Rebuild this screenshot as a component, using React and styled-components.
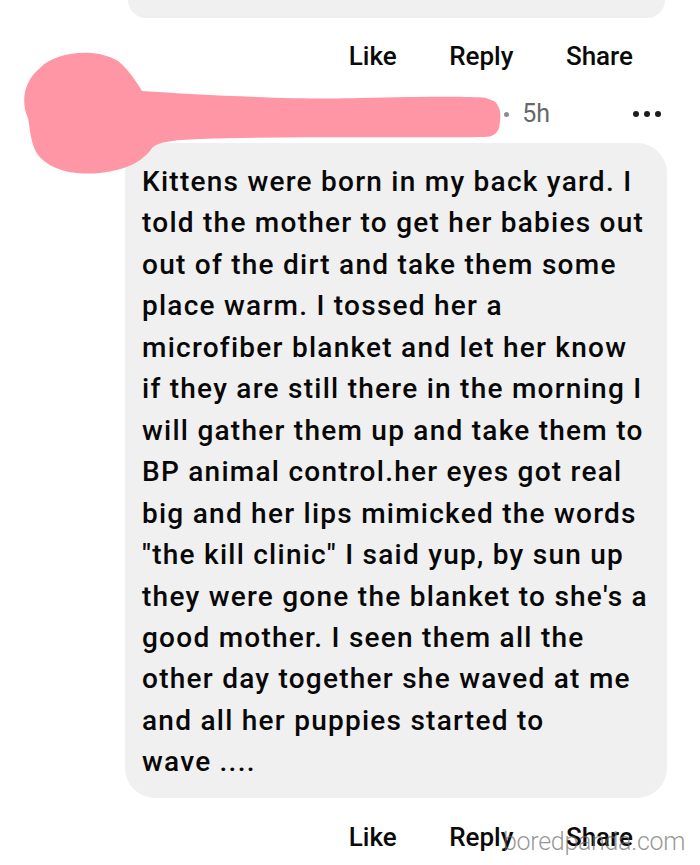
import React from 'react';
import styled, {createGlobalStyle} from 'styled-components';

const GlobalStyle = createGlobalStyle`
  html, body {
    margin: 0;
    padding: 0;
    background: #ffffff;
  }
  body {
    font-family: Roboto, "Liberation Sans", Arial, sans-serif;
    color: #050505;
  }
`;

const Page = styled.div`
  position: relative;
  width: 700px;
  height: 865px;
  overflow: hidden;
  background: #ffffff;
`;

const Thread = styled.div`
  display: grid;
  grid-template-columns: 125px 542px;
  padding-right: 33px;
`;

const Gutter = styled.div``;

const Column = styled.div`
  display: flex;
  flex-direction: column;
`;

const PrevBubble = styled.div`
  height: 18px;
  margin-left: 3px;
  margin-right: 2px;
  background: #f0f0f0;
  border-radius: 0 0 28px 28px;
`;

const Actions = styled.div`
  display: flex;
  justify-content: flex-end;
  gap: 52.5px;
  height: 30px;
  margin-top: ${p => p.$top}px;
  padding-right: 34px;
  font-size: 26px;
  line-height: 30px;
  font-weight: 500;
  color: #0a0a0a;
`;

const Action = styled.span`
  white-space: nowrap;
`;

const Meta = styled.div`
  display: flex;
  align-items: center;
  justify-content: flex-end;
  height: 30px;
  margin-top: 28px;
  padding-right: 6px;
  font-size: 25px;
  line-height: 30px;
  color: #65676b;
`;

const Dot = styled.span`
  width: 5px;
  height: 5px;
  border-radius: 50%;
  background: #8a8d91;
  margin-right: 13px;
`;

const Time = styled.span`
  margin-right: 83px;
`;

const Menu = styled.div`
  display: flex;
  gap: 5px;
  & > i {
    width: 6px;
    height: 6px;
    border-radius: 50%;
    background: #1c1c1c;
  }
`;

const Bubble = styled.div`
  margin-top: 14px;
  padding: 18px 12px 15px 17px;
  background: #f0f0f0;
  border-radius: 30px;
  font-size: 28px;
  line-height: 41.45px;
  font-weight: 500;
  letter-spacing: 1.25px;
  color: #080808;
`;

const Line = styled.div`
  white-space: nowrap;
`;

const Watermark = styled.div`
  position: absolute;
  left: 503px;
  top: 827px;
  font-size: 25px;
  line-height: 30px;
  font-weight: 300;
  letter-spacing: -0.3px;
  color: rgba(105, 105, 105, 0.7);
  pointer-events: none;
`;

const Scribble = styled.svg`
  position: absolute;
  left: 0;
  top: 0;
`;

const LINES = [
  'Kittens were born in my back yard. I',
  'told the mother to get her babies out',
  'out of the dirt and take them some',
  'place warm. I tossed her a',
  'microfiber blanket and let her know',
  'if they are still there in the morning I',
  'will gather them up and take them to',
  'BP animal control.her eyes got real',
  'big and her lips mimicked the words',
  '"the kill clinic" I said yup, by sun up',
  "they were gone the blanket to she's a",
  'good mother. I seen them all the',
  'other day together she waved at me',
  'and all her puppies started to',
  'wave ....',
];

const CommentActions = ({top}) => (
  <Actions $top={top}>
    <Action>Like</Action>
    <Action>Reply</Action>
    <Action>Share</Action>
  </Actions>
);

const App = () => {
  return (
    <Page>
      <GlobalStyle />
      <Thread>
        <Gutter />
        <Column>
          <PrevBubble />
          <CommentActions top={23} />
          <Meta>
            <Dot />
            <Time>5h</Time>
            <Menu><i /><i /><i /></Menu>
          </Meta>
          <Bubble>
            {LINES.map((l, i) => <Line key={i}>{l}</Line>)}
          </Bubble>
          <CommentActions top={24} />
        </Column>
      </Thread>

      <Scribble width="520" height="190" viewBox="0 0 520 190">
        <path
          fill="#ff96a6"
          d="M 40 68 C 55 52, 95 47, 118 61 C 130 71, 137 83, 142 91 C 200 95, 300 100, 360 98 C 420 97, 468 96, 486 98 C 490 100, 496 100, 498 106 C 502 112, 500 122, 499 128 C 497 134, 492 137, 484 137 C 420 138, 300 136, 200 139 C 172 140, 158 142, 152 148 C 144 160, 128 170, 100 173 C 70 176, 46 168, 36 152 C 30 140, 30 128, 28 118 C 20 100, 25 80, 40 68 Z"
        />
      </Scribble>

      <Watermark>boredpanda.com</Watermark>
    </Page>
  );
};

export default App;
